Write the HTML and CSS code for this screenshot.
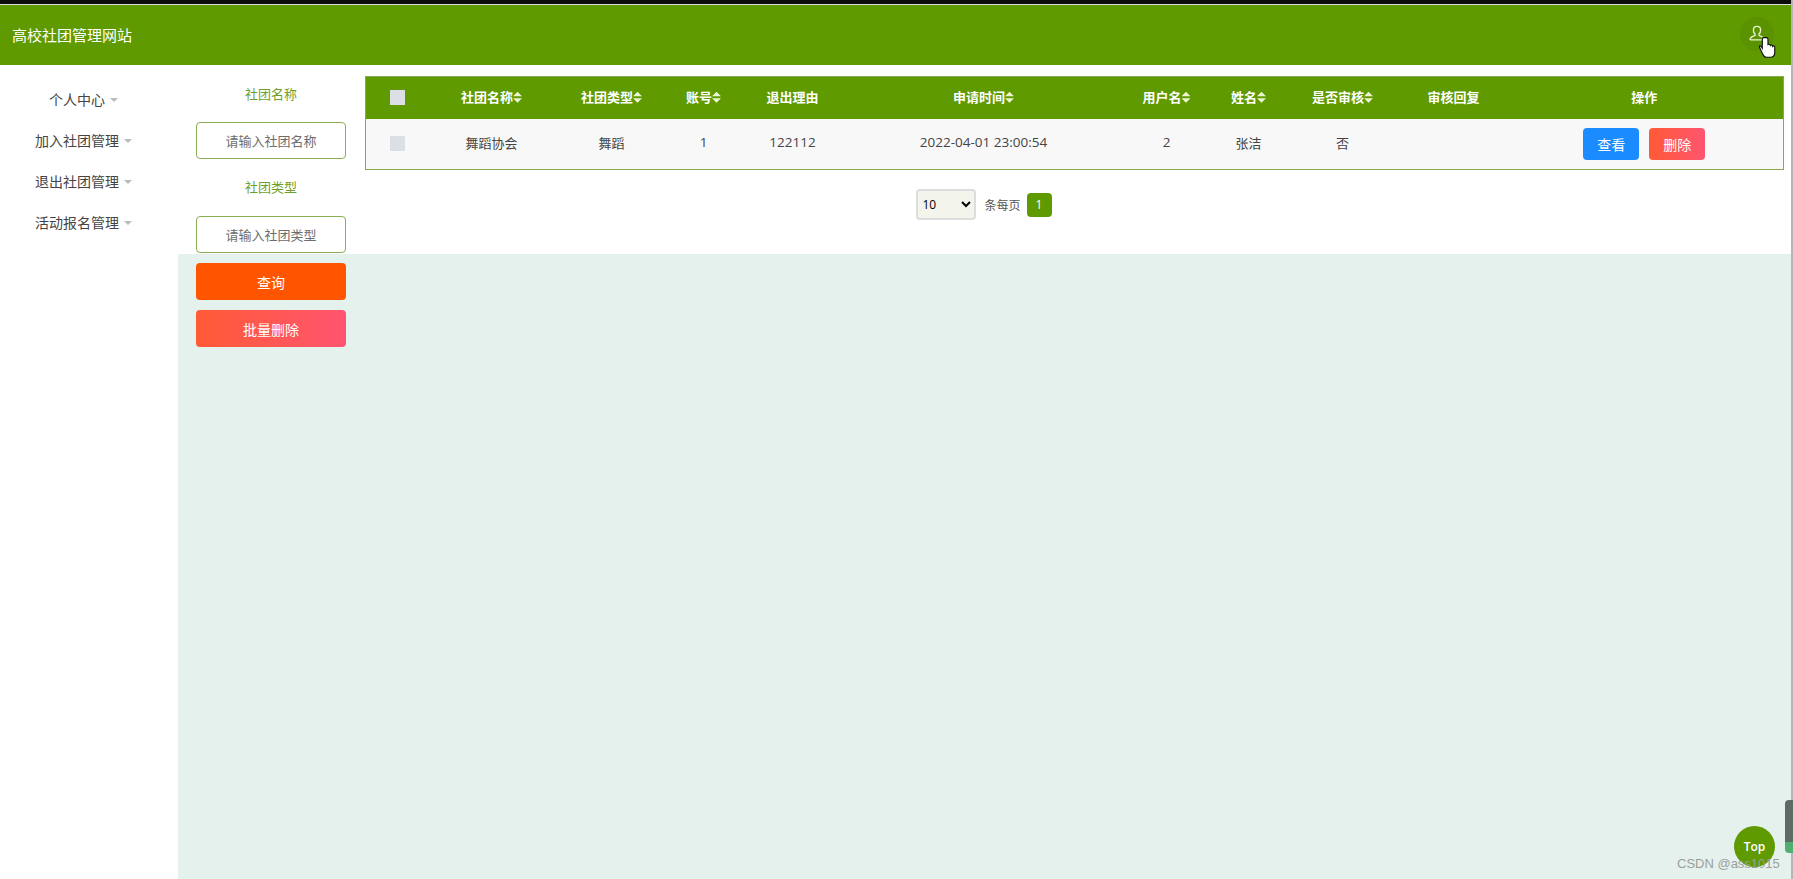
FILE: index.html
```html
<!DOCTYPE html>
<html lang="en">
<head>
  <meta charset="UTF-8">
  <meta name="viewport" content="width=device-width, initial-scale=1.0">
  <title>高校社团管理网站</title>
  <link rel="stylesheet" href="styles.css">
</head>
<body>
  <div class="top-edge"></div>
  <header class="header">
    <div class="site-title">高校社团管理网站</div>
    <div class="avatar">
      <svg class="avatar-icon" viewBox="0 0 20 20" width="18" height="18">
        <path d="M10 1.500c-2.700 0-4 2-4 4.200 0 1.900.8 3.300 1.800 4.300v1.600c-1.500.8-4.300 1.500-5.300 3.400-.4.800-.2 1.500.7 1.500h13.600c.9 0 1.100-.7.700-1.500-1-1.900-3.800-2.600-5.300-3.400V10c1-1 1.800-2.400 1.800-4.300 0-2.200-1.300-4.200-4-4.200z"/>
      </svg>
      <svg class="hand" viewBox="0 0 18 24" width="17" height="23">
        <path d="M5 1.600c-.9 0-1.500.7-1.500 1.600v9.600L2.300 11c-.8-.9-1.800-1-2-.2 0 .4.100.8.400 1.300l3 6.400c.9 1.900 2 3.800 4.300 3.800h4c2.800 0 4.700-2 4.700-5v-5.500c0-1-.6-1.500-1.300-1.500-.4 0-.7.100-1 .4 0-.9-.6-1.500-1.400-1.500-.4 0-.8.200-1 .5-.2-.8-.8-1.200-1.500-1.200-.4 0-.7.100-1 .3V3.200c0-.9-.6-1.600-1.500-1.600z"/>
      </svg>
    </div>
  </header>

  <div class="layout">
    <nav class="sidebar">
      <a class="menu-item">个人中心<span class="caret"></span></a>
      <a class="menu-item">加入社团管理<span class="caret"></span></a>
      <a class="menu-item">退出社团管理<span class="caret"></span></a>
      <a class="menu-item">活动报名管理<span class="caret"></span></a>
    </nav>

    <main class="content">
      <form class="search">
        <label class="search-label" for="club-name">社团名称</label>
        <input class="search-input" id="club-name" placeholder="请输入社团名称">
        <label class="search-label" for="club-type">社团类型</label>
        <input class="search-input" id="club-type" placeholder="请输入社团类型">
        <button class="btn btn-query" type="button">查询</button>
        <button class="btn btn-batch" type="button">批量删除</button>
      </form>

      <section class="list">
        <table class="table">
          <colgroup>
            <col class="c1"><col class="c2"><col class="c3"><col class="c4">
            <col class="c5"><col class="c6"><col class="c7"><col class="c8">
            <col class="c9"><col class="c10"><col class="c11">
          </colgroup>
          <thead>
            <tr>
              <th><span class="check"></span></th>
              <th>社团名称<span class="sort"></span></th>
              <th>社团类型<span class="sort"></span></th>
              <th>账号<span class="sort"></span></th>
              <th>退出理由</th>
              <th>申请时间<span class="sort"></span></th>
              <th>用户名<span class="sort"></span></th>
              <th>姓名<span class="sort"></span></th>
              <th>是否审核<span class="sort"></span></th>
              <th>审核回复</th>
              <th>操作</th>
            </tr>
          </thead>
          <tbody>
            <tr>
              <td><span class="check"></span></td>
              <td>舞蹈协会</td>
              <td>舞蹈</td>
              <td class="num">1</td>
              <td class="num">122112</td>
              <td class="num">2022-04-01 23:00:54</td>
              <td class="num">2</td>
              <td>张洁</td>
              <td>否</td>
              <td></td>
              <td class="op">
                <div class="actions">
                  <button class="row-btn row-view" type="button">查看</button>
                  <button class="row-btn row-del" type="button">删除</button>
                </div>
              </td>
            </tr>
          </tbody>
        </table>

        <div class="pager">
          <select class="page-size">
            <option>10</option>
          </select>
          <span class="page-text">条每页</span>
          <span class="page-num">1</span>
        </div>
      </section>
    </main>
  </div>

  <a class="to-top">Top</a>
  <div class="scroll-pill"></div>
  <div class="watermark">CSDN @ass1015</div>
</body>
</html>
```

FILE: styles.css
```css
html, body {
  margin: 0;
  padding: 0;
  height: 100%;
  overflow: hidden;
}

body {
  display: flex;
  flex-direction: column;
  font-family: "Open Sans", "Noto Sans CJK SC", sans-serif;
  color: #444;
  background: #fff;
  border-right: 2px solid #b5b5b5;
  box-sizing: border-box;
}

.top-edge {
  height: 4px;
  flex: none;
  background: #0c0c0c;
  border-bottom: 1px solid #ddd;
}

.header {
  flex: none;
  height: 60px;
  display: flex;
  justify-content: space-between;
  align-items: center;
  padding: 0 17px 2px 12px;
  box-sizing: border-box;
  background: #5f9a00;
}

.site-title {
  font-size: 15px;
  color: #fff;
}

.avatar {
  position: relative;
  width: 34px;
  height: 34px;
  display: flex;
  justify-content: center;
  align-items: center;
  border-radius: 50%;
  background: #5a9200;
}

.avatar-icon path {
  fill: none;
  stroke: #eaf5d0;
  stroke-width: 1.5;
}

.hand {
  position: absolute;
  left: 19px;
  top: 19px;
}

.hand path {
  fill: #fff;
  stroke: #111;
  stroke-width: 1.2;
}

.layout {
  flex: 1;
  display: flex;
  min-height: 0;
}

.sidebar {
  width: 178px;
  flex: none;
  padding: 23px 11px 0 0;
  box-sizing: border-box;
  display: flex;
  flex-direction: column;
  align-items: center;
  gap: 17px;
  background: #fff;
}

.menu-item {
  height: 24px;
  line-height: 24px;
  font-size: 14px;
  color: #444;
}

.caret {
  display: inline-block;
  margin-left: 5px;
  vertical-align: 3px;
  border: 4px solid transparent;
  border-top: 4px solid #bbb;
  border-bottom: 0;
}

.content {
  flex: 1;
  display: flex;
  gap: 19px;
  padding: 11px 6px 0 18px;
  background: linear-gradient(#fff 189px, #e5f1ed 189px);
}

.search {
  width: 150px;
  flex: none;
  display: flex;
  flex-direction: column;
}

.search-label {
  height: 46px;
  line-height: 36px;
  text-align: center;
  font-size: 13px;
  color: #6f9f2a;
}

.search-input {
  height: 37px;
  padding: 0;
  box-sizing: border-box;
  border: 1.5px solid #8aae55;
  border-radius: 4px;
  background: #fff;
  text-align: center;
  font-family: inherit;
  font-size: 13px;
}

.search-input + .search-label {
  margin-top: 9px;
  height: 48px;
  line-height: 38px;
}

.search-input::placeholder {
  color: #6d6d6d;
}

.btn {
  height: 37px;
  margin-top: 10px;
  border: 0;
  border-radius: 4px;
  color: #fff;
  font-family: inherit;
  font-size: 14px;
}

.btn-query {
  background: #ff5500;
}

.btn-batch {
  background: linear-gradient(90deg, #ff5a36, #ff5570);
}

.list {
  flex: 1;
  min-width: 0;
}

.table {
  width: 1419px;
  table-layout: fixed;
  border-collapse: collapse;
  font-size: 13px;
  text-align: center;
  border: 1px solid #8aa84f;
}

.c1 { width: 64px; }
.c2 { width: 124px; }
.c3 { width: 116px; }
.c4 { width: 68px; }
.c5 { width: 110px; }
.c6 { width: 272px; }
.c7 { width: 94px; }
.c8 { width: 70px; }
.c9 { width: 118px; }
.c10 { width: 104px; }
.c11 { width: 278px; }

.table th {
  height: 42px;
  padding: 0 0 3px;
  box-sizing: border-box;
  background: #5f9a00;
  color: #fff;
  font-weight: 700;
}

.table td {
  height: 51px;
  padding: 0 0 3px;
  box-sizing: border-box;
  background: #f8f8f9;
  color: #444;
}

.table .num {
  font-size: 13.5px;
}

.table .op {
  padding: 0;
}

.check {
  display: inline-block;
  width: 15px;
  height: 15px;
  vertical-align: middle;
  background: #dcdfe6;
}

.sort {
  display: inline-block;
  width: 9px;
  height: 11px;
  vertical-align: -1px;
  background: #eaf5d0;
  clip-path: polygon(50% 0, 100% 42%, 0 42%, 0 58%, 100% 58%, 50% 100%, 0 58%, 0 42%);
}

.actions {
  display: flex;
  justify-content: center;
  gap: 10px;
}

.row-btn {
  width: 56px;
  height: 32px;
  padding: 0;
  border: 0;
  border-radius: 4px;
  color: #fff;
  font-family: inherit;
  font-size: 14px;
}

.row-view {
  background: #1a8cff;
}

.row-del {
  background: linear-gradient(90deg, #ff5a36, #ff5570);
}

.pager {
  display: flex;
  justify-content: center;
  align-items: center;
  width: 1236px;
  height: 31px;
  margin-top: 19px;
  gap: 8px;
  font-size: 12px;
}

.page-size {
  width: 60px;
  height: 31px;
  margin-left: 2px;
  border: 2px solid #ddd;
  border-radius: 4px;
  background: #f3f4ec;
  font-family: "Open Sans", sans-serif;
  font-size: 12px;
}

.page-text {
  color: #555;
}

.page-num {
  width: 25px;
  height: 24px;
  margin-left: -2px;
  line-height: 24px;
  text-align: center;
  border-radius: 4px;
  background: #5f9a00;
  color: #fff;
}

.to-top {
  position: absolute;
  left: 1734px;
  top: 826px;
  width: 41px;
  height: 41px;
  line-height: 41px;
  text-align: center;
  border-radius: 50%;
  background: #5f9a00;
  color: #fff;
  font-size: 12px;
  font-weight: 600;
}

.scroll-pill {
  position: absolute;
  left: 1785px;
  top: 800px;
  width: 8px;
  height: 53px;
  border-radius: 4px 0 0 4px;
  background: linear-gradient(#5e6b64 80%, #4fae70 80%);
}

.watermark {
  position: absolute;
  left: 1677px;
  top: 856px;
  font-family: "Liberation Sans", sans-serif;
  font-size: 13px;
  color: #9a9f9e;
}
```
